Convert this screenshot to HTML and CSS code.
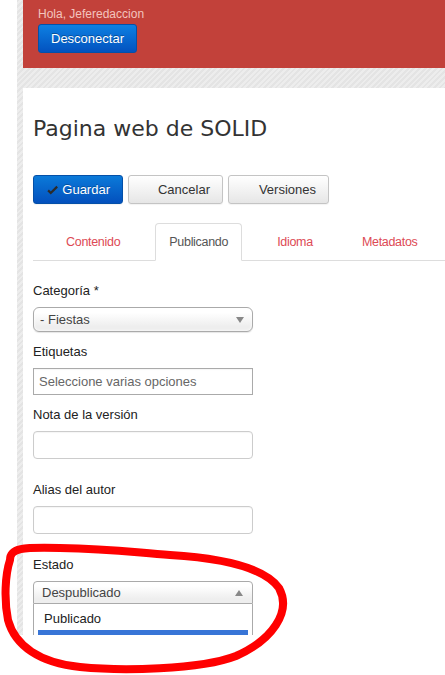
FILE: index.html
```
<!DOCTYPE html>
<html lang="es">
<head>
<meta charset="utf-8">
<title>Pagina web de SOLID</title>
<link rel="stylesheet" href="styles.css">
</head>
<body>
<div class="frame">
  <header class="topbar">
    <p class="hello">Hola, Jeferedaccion</p>
    <button class="btn-logout" type="button">Desconectar</button>
  </header>
  <main class="content">
    <h1 class="title">Pagina web de SOLID</h1>
    <div class="toolbar">
      <button class="btn btn-primary" type="button">
        <svg class="icon" width="15" height="12" viewBox="0 0 15 12"><polyline points="1.5,6.5 5,10 13.5,1.5" fill="none" stroke="#2b2b2b" stroke-width="3" stroke-linejoin="miter"/></svg>
        <span>Guardar</span>
      </button>
      <button class="btn" type="button"><span class="icon"></span><span>Cancelar</span></button>
      <button class="btn" type="button"><span class="icon"></span><span>Versiones</span></button>
    </div>
    <ul class="tabs">
      <li class="tab">Contenido</li>
      <li class="tab active">Publicando</li>
      <li class="tab">Idioma</li>
      <li class="tab">Metadatos</li>
    </ul>
    <form class="form">
      <div class="group">
        <label class="label">Categoría *</label>
        <div class="select"><span>- Fiestas</span><span class="arrow-down"></span></div>
      </div>
      <div class="group">
        <label class="label">Etiquetas</label>
        <div class="input input-square placeholder">Seleccione varias opciones</div>
      </div>
      <div class="group wide">
        <label class="label">Nota de la versión</label>
        <div class="input"></div>
      </div>
      <div class="group wide">
        <label class="label">Alias del autor</label>
        <div class="input"></div>
      </div>
      <div class="group">
        <label class="label">Estado</label>
        <div class="select select-open"><span>Despublicado</span><span class="arrow-up"></span></div>
        <ul class="dropdown">
          <li class="option">Publicado</li>
          <li class="option highlighted"></li>
        </ul>
      </div>
    </form>
  </main>
</div>
<svg class="annotation" width="445" height="675" viewBox="0 0 445 675">
  <path d="M 10 560 C 10 548, 22 547, 60 548 C 110 549, 130 552, 170 555 C 220 558, 264 567, 279 588 C 292 612, 272 640, 236 656 C 200 670, 120 671, 80 667 C 40 663, 15 646, 8 620 C 4 600, 5 575, 10 560 Z" fill="none" stroke="#ff0000" stroke-width="8" stroke-linecap="round" stroke-linejoin="round"/>
</svg>
</body>
</html>
```
FILE: styles.css
```
* { box-sizing: border-box; }
html, body { margin: 0; padding: 0; background: #fff; }
body {
  width: 445px;
  height: 675px;
  overflow: hidden;
  position: relative;
  font-family: "Liberation Sans", Arial, sans-serif;
  font-size: 13px;
  color: #333;
}
.frame {
  margin-left: 17px;
  height: 635px;
  overflow: hidden;
  padding-left: 6px;
  background: repeating-linear-gradient(135deg, #e4e4e4 0 2px, #ededed 2px 4px);
}
.topbar {
  height: 68px;
  background: #c2413a;
  padding: 7px 0 0 15px;
  margin-bottom: 20px;
}
.hello {
  margin: 0 0 3px;
  font-size: 12px;
  line-height: 14px;
  color: #f3c4bf;
}
.btn-logout {
  display: block;
  width: 99px;
  height: 29px;
  padding: 0;
  border: 1px solid #0450a8;
  border-radius: 3px;
  background: linear-gradient(#0d80e2, #0352bf);
  color: #fff;
  font-family: "Liberation Sans", Arial, sans-serif;
  font-size: 13px;
  text-shadow: 0 -1px 0 rgba(0,0,0,0.3);
}
.content {
  background: #fff;
  height: 547px;
  padding: 28px 0 0 10px;
}
.title {
  margin: 0 0 33px;
  font-family: "DejaVu Sans", Verdana, sans-serif;
  font-weight: normal;
  font-size: 22px;
  line-height: 26px;
  color: #333;
}
.toolbar {
  display: flex;
  gap: 5px;
  margin-bottom: 19px;
}
.btn {
  display: flex;
  align-items: center;
  height: 29px;
  padding: 0 12px 0 13px;
  border: 1px solid #c4c4c4;
  border-radius: 3px;
  background: linear-gradient(#ffffff, #e6e6e6);
  color: #333;
  font-family: "Liberation Sans", Arial, sans-serif;
  font-size: 13px;
  box-shadow: 0 1px 1px rgba(0,0,0,0.05);
}
.btn .icon {
  display: inline-block;
  width: 14px;
  height: 12px;
  margin-right: 5px;
}
.btn:nth-child(2) { width: 95px; padding-left: 18px; }
.btn:nth-child(3) { width: 101px; padding-left: 17px; }
.btn-primary {
  width: 90px;
  padding-left: 13px;
  border-color: #0450a8;
  background: linear-gradient(#0b7ad9, #0350bd);
  color: #fff;
  text-shadow: 0 -1px 0 rgba(0,0,0,0.25);
}
.btn-primary .icon { width: 15px; margin-right: 4px; }
.tabs {
  display: flex;
  margin: 0;
  padding: 0 0 0 19px;
  list-style: none;
  border-bottom: 1px solid #dddddd;
}
.tab {
  padding: 0 13px;
  line-height: 36px;
  border: 1px solid transparent;
  border-radius: 4px 4px 0 0;
  margin: 0 21px -1px 0;
  color: #dd4a55;
  font-size: 12.5px;
  letter-spacing: -0.3px;
}
.tab.active {
  color: #555;
  background: #fff;
  border-color: #dddddd #dddddd #fff;
}
.form { padding-top: 21px; }
.group { margin-bottom: 11px; width: 220px; }
.group.wide { margin-bottom: 22px; }
.label {
  display: block;
  font-size: 13px;
  line-height: 18px;
  margin-bottom: 7px;
  color: #222;
}
.select {
  display: flex;
  align-items: center;
  justify-content: space-between;
  height: 25px;
  padding: 0 8px 0 6px;
  border: 1px solid #aaaaaa;
  border-radius: 6px;
  background: linear-gradient(#ffffff 20%, #eeeeee 80%);
  box-shadow: 0 0 3px #fff inset, 0 1px 1px rgba(0,0,0,0.1);
  color: #444;
  font-size: 13px;
}
.arrow-down {
  width: 0; height: 0;
  border-left: 4px solid transparent;
  border-right: 4px solid transparent;
  border-top: 6px solid #888;
}
.arrow-up {
  width: 0; height: 0;
  border-left: 4px solid transparent;
  border-right: 4px solid transparent;
  border-bottom: 6px solid #888;
}
.select-open {
  height: 23px;
  padding-left: 8px;
  padding-right: 9px;
  border-radius: 4px 4px 0 0;
  box-shadow: 0 1px 0 #fff inset;
}
.input {
  height: 28px;
  border: 1px solid #cccccc;
  border-radius: 4px;
  background: #fff;
  box-shadow: inset 0 1px 1px rgba(0,0,0,0.04);
}
.input-square {
  height: 27px;
  border-radius: 0;
  border-color: #aaaaaa;
}
.placeholder {
  display: flex;
  align-items: center;
  padding-left: 5px;
  color: #666;
  font-size: 13px;
}
.dropdown {
  list-style: none;
  margin: 0;
  padding: 4px 4px 0;
  border: 1px solid #aaaaaa;
  border-top: 0;
  background: #fff;
}
.option {
  height: 22px;
  line-height: 22px;
  padding-left: 6px;
  color: #222;
  font-size: 13px;
}
.option.highlighted {
  background: #3875d7;
}
.annotation {
  position: absolute;
  left: 0;
  top: 0;
  pointer-events: none;
}
```
